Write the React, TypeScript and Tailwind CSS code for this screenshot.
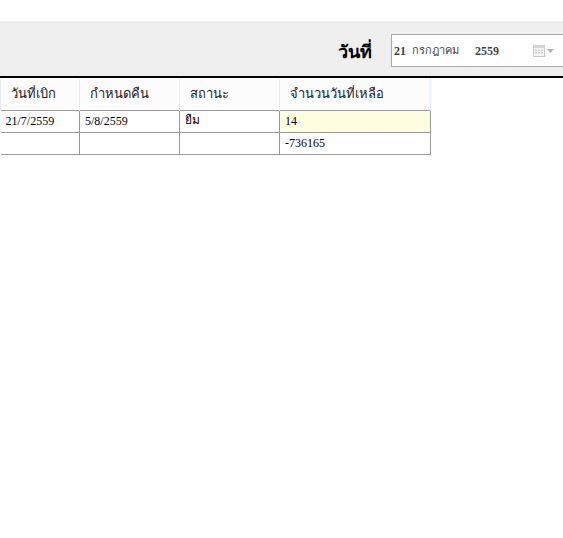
import React from 'react';

const rows = [
  { borrow: '21/7/2559', due: '5/8/2559', status: 'ยืม', left: '14', hl: true },
  { borrow: '', due: '', status: '', left: '-736165', hl: false },
];

export default function App() {
  return (
    <div className="bg-white min-h-screen w-[563px] overflow-hidden" style={{ fontFamily: '"Liberation Serif", "Noto Sans", serif' }}>
      <div className="h-[21px]" />
      <div className="h-[55px] bg-[#efefef] flex items-end pb-[9px] pl-[338px] overflow-hidden">
        <span className="shrink-0 whitespace-nowrap text-[18px] font-bold text-black leading-[32px] w-[53px]" style={{ fontFamily: 'Tahoma, "Noto Sans", sans-serif' }}>วันที่</span>
        <div className="h-[33px] w-[200px] shrink-0 bg-white border border-[#aaaaaa] flex items-center pl-[2px] text-[12px] text-[#444] whitespace-nowrap">
          <span className="font-bold">21</span>
          <span className="ml-[6px] w-[63px] text-[11px]">กรกฎาคม</span>
          <span className="font-bold">2559</span>
          <span className="ml-[34px] flex items-center gap-[2px]">
            <svg width="12" height="12" viewBox="0 0 12 12">
              <rect x="0.5" y="0.5" width="11" height="11" fill="#f4f4f4" stroke="#c8c8c8" />
              <rect x="0.5" y="0.5" width="11" height="2.5" fill="#d6d6d6" />
              <g fill="#d0d0d0">
                <rect x="2" y="4.5" width="2" height="1.5" /><rect x="5" y="4.5" width="2" height="1.5" /><rect x="8" y="4.5" width="2" height="1.5" />
                <rect x="2" y="7" width="2" height="1.5" /><rect x="5" y="7" width="2" height="1.5" /><rect x="8" y="7" width="2" height="1.5" />
              </g>
            </svg>
            <svg width="7" height="4" viewBox="0 0 7 4"><path d="M0 0h7L3.5 4z" fill="#b5b5b5" /></svg>
          </span>
        </div>
      </div>
      <div className="h-[2px] bg-black" />
      <table className="border-collapse w-[430px] table-fixed text-[12px] text-black">
        <colgroup>
          <col className="w-[79px]" />
          <col className="w-[100px]" />
          <col className="w-[100px]" />
          <col className="w-[151px]" />
        </colgroup>
        <thead>
          <tr className="h-[32px] bg-[#fcfcfc] text-[13px] text-[#222]">
            {['วันที่เบิก', 'กำหนดคืน', 'สถานะ', 'จำนวนวันที่เหลือ'].map((h) => (
              <th key={h} className="font-normal text-left pl-[10px] border-x border-[#e4ebf2] whitespace-nowrap" style={{ fontFamily: 'Tahoma, "Noto Sans", sans-serif' }}>{h}</th>
            ))}
          </tr>
        </thead>
        <tbody>
          {rows.map((r, i) => (
            <tr key={i} className="h-[22px]">
              <td className="border border-[#9a9a9a] pl-[5px] border-l-0">{r.borrow}</td>
              <td className="border border-[#9a9a9a] pl-[5px]">{r.due}</td>
              <td className="border border-[#9a9a9a] pl-[5px] align-top" style={{ fontFamily: 'Tahoma, "Noto Sans", sans-serif' }}>{r.status}</td>
              <td className={`border border-[#9a9a9a] pl-[5px] ${r.hl ? 'bg-[#fffde0]' : ''}`}>{r.left}</td>
            </tr>
          ))}
        </tbody>
      </table>
    </div>
  );
}
